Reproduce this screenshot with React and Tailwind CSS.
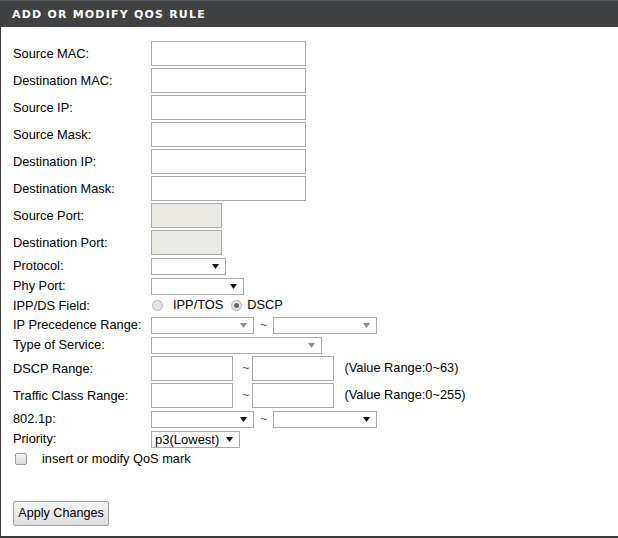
import React from "react"

const font = { fontFamily: '"Liberation Sans", Arial, sans-serif' }

const Arrow = ({ dim }) => (
  <svg width="7" height="5" viewBox="0 0 7 5" className="shrink-0">
    <path d="M0 0h7L3.5 5z" fill={dim ? "#8a8a8a" : "#111"} />
  </svg>
)

const Select = ({ w, dim, text }) => (
  <div
    className={`h-[17px] border border-[#a9a9a9] bg-white flex items-center justify-between pl-[3px] pr-[6px] ${w}`}
  >
    <span className="text-[13px] leading-none text-black">{text}</span>
    <Arrow dim={dim} />
  </div>
)

const TextBox = ({ w = "w-[155px]", gray }) => (
  <div className={`h-[25px] border border-[#a9a9a9] ${gray ? "bg-[#ebe9e4]" : "bg-white"} ${w}`} />
)

const Row = ({ label, h = "h-[27px]", children }) => (
  <div className={`flex items-center ${h}`}>
    <div className="w-[138px] shrink-0 pt-[1px]">{label}</div>
    <div className="flex items-center">{children}</div>
  </div>
)

const Radio = ({ checked }) => (
  <span className="w-[11px] h-[11px] rounded-full border border-[#b4b4b4] bg-[#e4e4e4] flex items-center justify-center">
    {checked && <span className="w-[5px] h-[5px] rounded-full bg-[#6a6a6a]" />}
  </span>
)

export default function App() {
  const inputRows = [
    "Source MAC:",
    "Destination MAC:",
    "Source IP:",
    "Source Mask:",
    "Destination IP:",
    "Destination Mask:",
  ]

  return (
    <div className="w-[618px] h-[538px] bg-white text-black text-[12.8px] leading-none" style={font}>
      <div className="h-[27px] bg-[#404142] border-t border-[#555] flex items-center pl-[12px]">
        <span
          className="text-white text-[11px] font-bold tracking-[1.2px]"
          style={{ fontFamily: '"DejaVu Sans", Verdana, sans-serif' }}
        >
          ADD OR MODIFY QOS RULE
        </span>
      </div>

      <div className="h-[511px] border-l border-b-2 border-[#3a3a3a] pl-[12px] pt-[13px]">
        {inputRows.map((l) => (
          <Row key={l} label={l}>
            <TextBox />
          </Row>
        ))}
        <Row label="Source Port:">
          <TextBox w="w-[71px]" gray />
        </Row>
        <Row label="Destination Port:">
          <TextBox w="w-[71px]" gray />
        </Row>

        <Row label="Protocol:" h="h-[20px]">
          <Select w="w-[75px]" />
        </Row>
        <Row label="Phy Port:" h="h-[20px]">
          <Select w="w-[93px]" />
        </Row>
        <Row label="IPP/DS Field:" h="h-[19px]">
          <div className="flex items-center pl-[1px]">
            <Radio />
            <span className="ml-[10px]">IPP/TOS</span>
            <span className="ml-[8px]">
              <Radio checked />
            </span>
            <span className="ml-[5px]">DSCP</span>
          </div>
        </Row>
        <Row label="IP Precedence Range:" h="h-[20px]">
          <Select w="w-[103px]" dim />
          <span className="mx-[6px] text-[#555]">~</span>
          <Select w="w-[104px]" dim />
        </Row>
        <Row label="Type of Service:" h="h-[20px]">
          <Select w="w-[171px]" dim />
        </Row>
        <Row label="DSCP Range:">
          <TextBox w="w-[82px]" />
          <span className="ml-[9px] mr-[3px] text-[#555]">~</span>
          <TextBox w="w-[82px]" />
          <span className="ml-[10px]">(Value Range:0~63)</span>
        </Row>
        <Row label="Traffic Class Range:">
          <TextBox w="w-[82px]" />
          <span className="ml-[9px] mr-[3px] text-[#555]">~</span>
          <TextBox w="w-[82px]" />
          <span className="ml-[10px]">(Value Range:0~255)</span>
        </Row>
        <Row label="802.1p:" h="h-[20px]">
          <Select w="w-[103px]" />
          <span className="mx-[6px] text-[#555]">~</span>
          <Select w="w-[104px]" />
        </Row>
        <Row label="Priority:" h="h-[20px]">
          <Select w="w-[89px]" text="p3(Lowest)" />
        </Row>
        <div className="h-[20px] flex items-center">
          <span className="ml-[2px] w-[12px] h-[12px] rounded-[2px] border border-[#9c9c9c] bg-gradient-to-b from-[#f4f4f4] to-[#dcdcdc]" />
          <span className="ml-[15px] pt-[1px]">insert or modify QoS mark</span>
        </div>

        <button className="mt-[32px] h-[25px] w-[96px] border border-[#a0a0a0] rounded-[2px] bg-gradient-to-b from-[#f6f6f6] to-[#dedede] text-[12.6px] text-black flex items-center justify-center">
          Apply Changes
        </button>
      </div>
    </div>
  )
}
